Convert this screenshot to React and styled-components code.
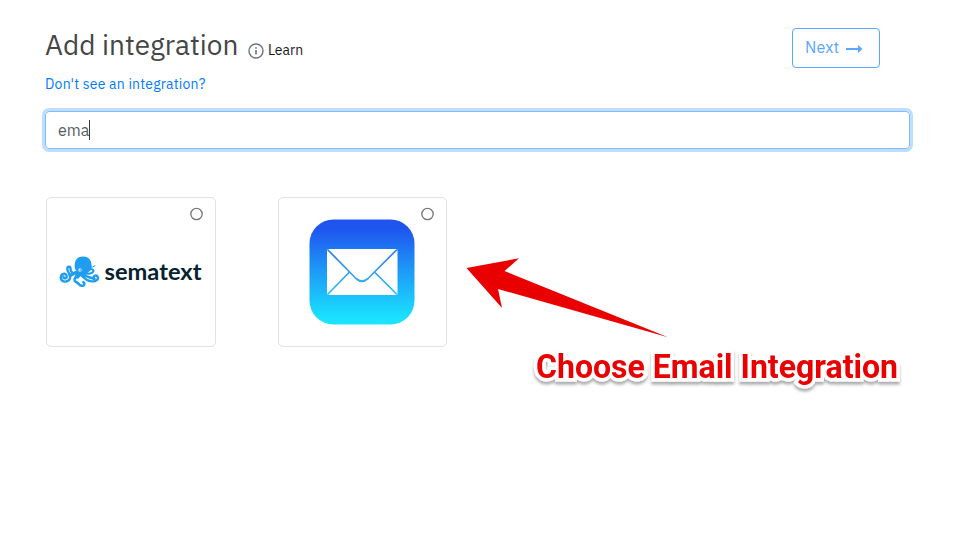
import React from 'react';
import styled, { createGlobalStyle } from 'styled-components';

const GlobalStyle = createGlobalStyle`
  * { box-sizing: border-box; }
  body { margin: 0; background: #fff; font-family: 'IBM Plex Sans', Roboto, sans-serif; }
`;

const Page = styled.main`
  height: 542px;
  padding: 28px 51px 0 45px;
  overflow: hidden;
`;

const Header = styled.header`
  display: flex;
  justify-content: space-between;
  align-items: flex-start;
  height: 40px;
  padding-right: 30px;
`;

const TitleGroup = styled.div`
  display: flex;
  align-items: flex-start;
`;

const Title = styled.h1`
  width: 203px;
  margin: 0;
  color: #444648;
  font-size: 28px;
  line-height: 34px;
  font-weight: 400;
  white-space: nowrap;
`;

const Learn = styled.span`
  display: flex;
  align-items: center;
  gap: 4px;
  height: 16px;
  margin-top: 14px;
  color: #17191c;
  font-size: 14px;
  white-space: nowrap;

  svg { margin-top: 1px; }
`;

const NextButton = styled.button`
  display: flex;
  align-items: center;
  gap: 7px;
  width: 88px;
  height: 40px;
  padding: 0 0 2px 12px;
  border: 1px solid #59a7ff;
  border-radius: 4px;
  background: #fff;
  color: #59a7ff;
  font: 400 16px 'IBM Plex Sans', Roboto, sans-serif;
  letter-spacing: 0.15px;

  svg { margin-top: 3px; }
`;

const HelpLink = styled.a`
  display: block;
  width: max-content;
  margin-top: 6px;
  color: #007bff;
  font-size: 14px;
  line-height: 20px;
  letter-spacing: 0.2px;
`;

const SearchBox = styled.div`
  display: flex;
  align-items: center;
  height: 38px;
  margin-top: 17px;
  padding: 0 12px;
  border: 1px solid #80bdff;
  border-radius: 4px;
  box-shadow: 0 0 0 3px #bfdeff;
  color: #565d64;
  font-size: 16px;
`;

const Caret = styled.span`
  width: 1px;
  height: 20px;
  background: #343a40;
`;

const Cards = styled.div`
  display: flex;
  gap: 62px;
  margin: 48px 0 0 1px;
`;

const Card = styled.div`
  position: relative;
  display: flex;
  align-items: center;
  justify-content: center;
  width: ${({ $width }) => $width}px;
  height: 150px;
  border: 1px solid #dee2e6;
  border-radius: 5px;
`;

const Radio = styled.svg`
  position: absolute;
  top: 9px;
  right: 12px;
`;

const ArrowMark = styled.svg`
  position: absolute;
  left: 460px;
  top: 250px;
`;

const Callout = styled.svg`
  position: absolute;
  left: 520px;
  top: 335px;
`;

const RadioMark = () => (
  <Radio width="13" height="14" viewBox="0 0 13 14">
    <circle cx="6.500" cy="7" r="5.700" fill="#fff" stroke="#767676" strokeWidth="1.300" />
  </Radio>
);

const InfoIcon = () => (
  <svg width="16" height="16" viewBox="0 0 16 16" fill="none" stroke="#6c757d">
    <circle cx="8" cy="8" r="7" strokeWidth="1.4" />
    <path d="M8 7.1v4.500M8 4.2v1.6" strokeWidth="1.6" />
  </svg>
);

const NextArrow = () => (
  <svg width="17" height="10" viewBox="0 0 17 10" fill="#59a7ff">
    <path d="M0 4h12V1l4.500 4L12 9V6H0z" />
  </svg>
);

const SematextLogo = () => (
  <svg width="146" height="52" viewBox="58 246 146 52">
    <path d="M75 269C73.500 261 77 256.500 83 256.500S92.300 261 91.500 267.500C91 270 89 272 87 273.500L84.500 277.500L80.500 276L78 279L74.500 277L77 271.500Z" fill="#1f9df0" />
    <g fill="none" stroke="#1f9df0" strokeLinecap="round">
      <path d="M77 273.500C71.500 274 70.500 270.500 70.500 268.500S67 265.500 67.300 269C67.300 273 71.500 274 70 278.500C67.500 283.500 60.800 282 60.800 277.500C60.800 273 66.500 272.600 66.700 276.200C66.700 279 63.500 279 63.500 276.800" strokeWidth="2.400" />
      <path d="M76 272.500L70 275.500" strokeWidth="3.200" />
      <path d="M77 275C75 279 73 280 76 282C79.500 283.500 79 285.600 81.500 285.800C84.500 286 85.300 283.800 83.300 282" strokeWidth="2.500" />
      <path d="M81 275C84 277.500 86 280.500 90.500 281.200C96.500 282.300 99 279 97.500 276.500C96 274.500 92.500 276 94 278.200" strokeWidth="2.300" />
      <path d="M83 274C86 277.500 91 277 94.500 279" strokeWidth="2.600" />
      <path d="M84 273C88 274.300 93 273.600 93.500 270.800C93.500 269.200 91 268.800 88.500 269.500" strokeWidth="2" />
      <path d="M90 267.400Q93 267.400 95 265.800" strokeWidth="1" />
    </g>
    <circle cx="80" cy="270" r="1.700" fill="#d8efff" />
    <circle cx="80.300" cy="270" r=".8" fill="#1f9df0" />
    <text x="104.500" y="279.800" textLength="97" lengthAdjust="spacingAndGlyphs" fill="#06222f" fontFamily="Lato, sans-serif" fontSize="23" fontWeight="700">sematext</text>
  </svg>
);

const MailIcon = styled.svg`
  margin-right: 2px;
`;

const MailLogo = () => (
  <MailIcon width="106" height="106" viewBox="0 0 106 106">
    <defs>
      <linearGradient id="mail" x2="0" y2="1">
        <stop offset=".08" stopColor="#1f54ef" />
        <stop offset=".5" stopColor="#1d9cf7" />
        <stop offset=".94" stopColor="#1ae2ff" />
      </linearGradient>
      <linearGradient id="mailLines" gradientUnits="userSpaceOnUse" x1="0" y1="0" x2="0" y2="106">
        <stop offset=".08" stopColor="#1f54ef" />
        <stop offset=".5" stopColor="#359eee" />
        <stop offset=".94" stopColor="#1ae2ff" />
      </linearGradient>
    </defs>
    <rect x=".5" y=".5" width="105" height="105" rx="24" fill="url(#mail)" />
    <rect x="18" y="30" width="70.500" height="46" rx="1" fill="#fff" />
    <path d="M18.500 30.500L47 59.500Q53 65 59 59.500L88 30.500M18.500 75.500L40.500 53M88 75.500L65.500 53" fill="none" stroke="url(#mailLines)" strokeWidth="1.700" />
  </MailIcon>
);

export default function App() {
  return (
    <>
      <GlobalStyle />
      <Page>
        <Header>
          <TitleGroup>
            <Title>Add integration</Title>
            <Learn><InfoIcon />Learn</Learn>
          </TitleGroup>
          <NextButton>Next <NextArrow /></NextButton>
        </Header>
        <HelpLink>Don't see an integration?</HelpLink>
        <SearchBox>ema<Caret /></SearchBox>
        <Cards>
          <Card $width={170}><SematextLogo /><RadioMark /></Card>
          <Card $width={169}><MailLogo /><RadioMark /></Card>
        </Cards>
      </Page>
      <ArrowMark width="210" height="92" viewBox="460 250 210 92">
        <path d="M466.500 268L519 258.300L504.500 271L668 337.300L498 289L502 308Z" fill="#e90000" />
      </ArrowMark>
      <Callout width="400" height="70" viewBox="520 335 400 70">
        <defs>
          <filter id="lift" x="-5%" y="-20%" width="110%" height="150%">
            <feDropShadow dx="0" dy="3" stdDeviation="1.600" floodColor="#000" floodOpacity=".33" />
          </filter>
        </defs>
        <text x="536" y="378.200" textLength="362" lengthAdjust="spacingAndGlyphs" fill="#e90000" stroke="#fff" strokeWidth="7" paintOrder="stroke" filter="url(#lift)" fontFamily="Roboto, sans-serif" fontSize="32.500" fontWeight="700">Choose Email Integration</text>
      </Callout>
    </>
  );
}
